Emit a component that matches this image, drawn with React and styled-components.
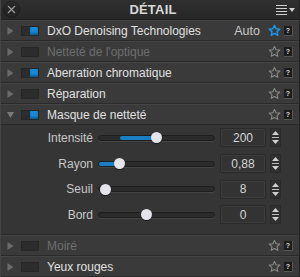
import React from 'react';
import styled, { createGlobalStyle } from 'styled-components';

const GlobalStyle = createGlobalStyle`
  html, body {
    margin: 0;
    padding: 0;
    background: #2e2e2e;
  }
  * {
    box-sizing: border-box;
  }
`;

const Panel = styled.div`
  width: 300px;
  height: 277px;
  overflow: hidden;
  display: flex;
  flex-direction: column;
  background: #333333;
  font-family: 'Liberation Sans', Arial, sans-serif;
  color: #dcdcdc;
  border-left: 1px solid #444;
  border-right: 1px solid #222;
`;

const Header = styled.div`
  height: 20px;
  flex-shrink: 0;
  display: flex;
  align-items: center;
  justify-content: space-between;
  padding: 0 3px 0 2px;
  background: linear-gradient(#2f2f2f, #282828);
  border-bottom: 1px solid #1f1f1f;
`;

const CloseButton = styled.div`
  width: 17px;
  height: 17px;
  border-radius: 50%;
  background: #252525;
  border: 1px solid #1c1c1c;
  box-shadow: inset 0 1px 0 #3a3a3a;
  display: flex;
  align-items: center;
  justify-content: center;
`;

const Title = styled.div`
  font-weight: bold;
  font-size: 13px;
  color: #d8d8d8;
  letter-spacing: 0.2px;
  margin-left: 10px;
`;

const MenuButton = styled.div`
  display: flex;
  align-items: center;
  width: 20px;
`;

const Row = styled.div`
  height: 21px;
  flex-shrink: 0;
  display: flex;
  align-items: center;
  padding: 0 6px 0 6px;
  background: #3a3a3a;
  border-bottom: 1px solid #2a2a2a;
  border-top: 1px solid #444;
`;

const Toggle = styled.div`
  width: 18px;
  height: 10px;
  margin-left: 7px;
  margin-right: 8px;
  background: #2c2c2c;
  border: 1px solid #262626;
  display: flex;
  justify-content: flex-end;
  align-items: center;
`;

const ToggleKnob = styled.div`
  width: 8px;
  height: 8px;
  background: ${(p) => (p.$on ? '#1a8ad4' : 'transparent')};
  box-shadow: ${(p) => (p.$on ? 'inset 0 -2px 2px #0d5f9a' : 'none')};
`;

const RowLabel = styled.div`
  flex: 1;
  font-size: 12px;
  color: ${(p) => (p.$disabled ? '#6e6e6e' : '#e0e0e0')};
  white-space: nowrap;
`;

const AutoText = styled.span`
  font-size: 12.5px;
  color: #c8c8c8;
  margin-right: 8px;
`;

const HelpBox = styled.div`
  width: 9px;
  height: 10px;
  margin-left: 3px;
  background: #1c1c1c;
  border: 1px solid #555;
  border-width: 0 1px 1px 0;
  color: #dcdcdc;
  font-size: 7px;
  font-weight: bold;
  display: flex;
  align-items: center;
  justify-content: center;
  line-height: 1;
`;

const Sliders = styled.div`
  flex: 1;
  display: flex;
  flex-direction: column;
  background: #353535;
  border-bottom: 1px solid #2a2a2a;
`;

const SliderRow = styled.div`
  height: 25.7px;
  display: grid;
  grid-template-columns: 97px 117px 51px 15px;
  align-items: center;
`;

const SliderLabel = styled.div`
  font-size: 12px;
  color: #c8c8c8;
  text-align: right;
  padding-right: 5px;
`;

const Track = styled.div`
  position: relative;
  width: 117px;
  height: 6px;
  border-radius: 3px;
  background: #2b2b2b;
  border: 1px solid #1e1e1e;
  box-shadow: 0 1px 0 #444;
`;

const Fill = styled.div`
  position: absolute;
  top: 0;
  bottom: 0;
  background: #1a7fc4;
  border-radius: 2px;
`;

const Thumb = styled.div`
  position: absolute;
  top: 50%;
  width: 11px;
  height: 11px;
  margin: -5.5px 0 0 -5.5px;
  border-radius: 50%;
  background: #e4e4ea;
  box-shadow: 0 1px 1px rgba(0, 0, 0, 0.5);
`;

const ValueBox = styled.div`
  width: 46px;
  height: 19px;
  margin-left: 5px;
  border: 1px solid #2a2a2a;
  border-radius: 2px;
  background: #333;
  box-shadow: inset 0 0 0 1px #3c3c3c;
  font-size: 12px;
  color: #d4d4d4;
  display: flex;
  align-items: center;
  justify-content: center;
`;

const Spinner = styled.div`
  width: 11px;
  height: 19px;
  margin-left: 4px;
  border: 1px solid #2a2a2a;
  background: #303030;
  display: flex;
  flex-direction: column;
  align-items: center;
  justify-content: space-evenly;
`;

const SpinDivider = styled.div`
  width: 7px;
  height: 1px;
  background: #bcbcbc;
`;

const Arrow = ({ down }) => (
  <svg width="7" height="4" viewBox="0 0 7 4">
    <path d={down ? 'M0 0 L7 0 L3.5 4 Z' : 'M0 4 L7 4 L3.5 0 Z'} fill="#cfcfcf" />
  </svg>
);

const Triangle = ({ open }) => (
  <svg width="7" height="8" viewBox="0 0 7 8">
    {open ? (
      <path d="M0 1 L7 1 L3.5 7 Z" fill="#7a7a7a" />
    ) : (
      <path d="M0.5 0 L6.5 4 L0.5 8 Z" fill="#6a6a6a" />
    )}
  </svg>
);

const Star = ({ active }) => (
  <svg width="13" height="13" viewBox="0 0 24 24">
    <path
      d="M12 2.5l2.9 6.3 6.9.7-5.2 4.6 1.5 6.8L12 17.4l-6.1 3.5 1.5-6.8-5.2-4.6 6.9-.7z"
      fill="none"
      stroke={active ? '#1b96ea' : '#8a8a8a'}
      strokeWidth={active ? 2.6 : 2}
      strokeLinejoin="round"
    />
  </svg>
);

const Section = ({ label, on, open, disabled, auto }) => (
  <Row>
    <Triangle open={open} />
    <Toggle>
      <ToggleKnob $on={on} />
    </Toggle>
    <RowLabel $disabled={disabled}>{label}</RowLabel>
    {auto && <AutoText>Auto</AutoText>}
    <Star active={auto} />
    <HelpBox>?</HelpBox>
  </Row>
);

const Slider = ({ label, value, thumb, fillFrom, fillTo }) => (
  <SliderRow>
    <SliderLabel>{label}</SliderLabel>
    <Track>
      {fillTo != null && (
        <Fill style={{ left: `${fillFrom}%`, width: `${fillTo - fillFrom}%` }} />
      )}
      <Thumb style={{ left: `${thumb}%` }} />
    </Track>
    <ValueBox>{value}</ValueBox>
    <Spinner>
      <Arrow />
      <SpinDivider />
      <Arrow down />
    </Spinner>
  </SliderRow>
);

export default function App() {
  return (
    <>
      <GlobalStyle />
      <Panel>
        <Header>
          <CloseButton>
            <svg width="9" height="9" viewBox="0 0 9 9">
              <path d="M1 1 L8 8 M8 1 L1 8" stroke="#9a9a9a" strokeWidth="1.2" />
            </svg>
          </CloseButton>
          <Title>DÉTAIL</Title>
          <MenuButton>
            <svg width="20" height="12" viewBox="0 0 20 12">
              <path d="M0 1.5 H11 M0 4.5 H11 M0 7.5 H11 M0 10.5 H11" stroke="#d0d0d0" strokeWidth="1" />
              <path d="M13 4 L19 4 L16 8 Z" fill="#d0d0d0" />
            </svg>
          </MenuButton>
        </Header>
        <Section label="DxO Denoising Technologies" on auto />
        <Section label="Netteté de l'optique" disabled />
        <Section label="Aberration chromatique" on />
        <Section label="Réparation" />
        <Section label="Masque de netteté" on open />
        <Sliders>
          <Slider label="Intensité" value="200" thumb={50} fillFrom={18} fillTo={50} />
          <Slider label="Rayon" value="0,88" thumb={18} fillFrom={0} fillTo={18} />
          <Slider label="Seuil" value="8" thumb={6} />
          <Slider label="Bord" value="0" thumb={41} />
        </Sliders>
        <Section label="Moiré" disabled />
        <Section label="Yeux rouges" />
      </Panel>
    </>
  );
}
